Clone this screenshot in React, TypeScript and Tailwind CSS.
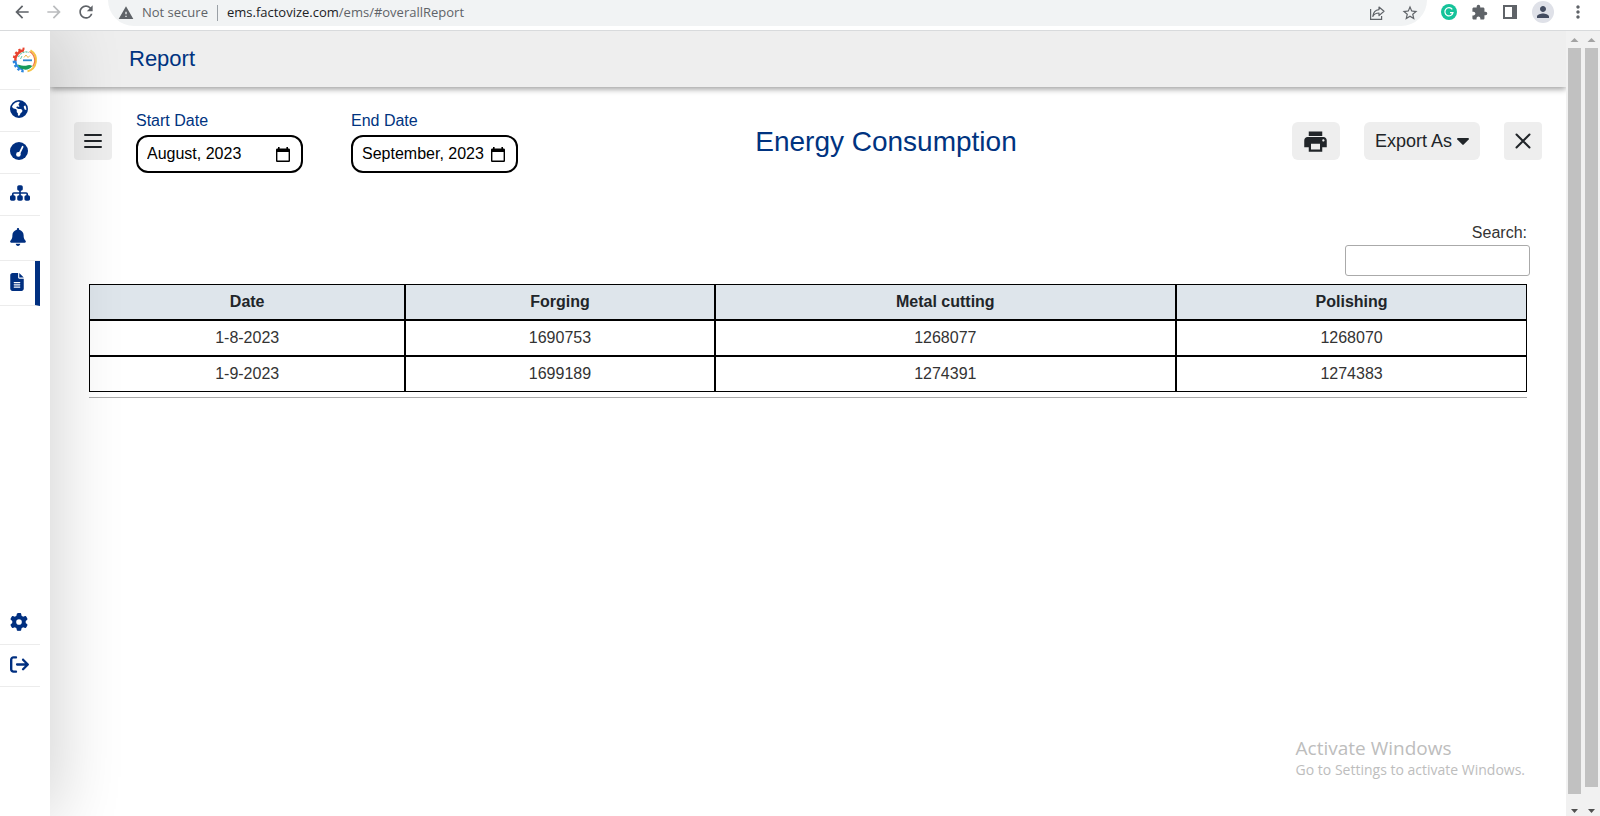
import { useState } from "react";
import type { ReactNode } from "react";
import {
  FaArrowRightFromBracket,
  FaBell,
  FaEarthAmericas,
  FaFileLines,
  FaGear,
  FaSitemap,
} from "react-icons/fa6";
import {
  MdArrowBack,
  MdArrowForward,
  MdExtension,
  MdLocalPrintshop,
  MdMoreVert,
  MdPerson,
  MdRefresh,
  MdStarBorder,
  MdWarning,
} from "react-icons/md";

const columns = ["Date", "Forging", "Metal cutting", "Polishing"];

const rows = [
  ["1-8-2023", "1690753", "1268077", "1268070"],
  ["1-9-2023", "1699189", "1274391", "1274383"],
];

function BrowserBar() {
  return (
    <div className="flex h-[31px] shrink-0 items-start border-b border-[#d8dadc] bg-white font-['Open_Sans',sans-serif] text-[#5f6368]">
      <div className="flex h-6 items-center gap-3 pl-3">
        <button aria-label="Back">
          <MdArrowBack size={20} />
        </button>
        <button aria-label="Forward" className="text-[#babcbe]">
          <MdArrowForward size={20} />
        </button>
        <button aria-label="Reload">
          <MdRefresh size={20} />
        </button>
      </div>
      <div className="ml-3 flex h-[26px] flex-1 items-center rounded-b-full bg-[#f1f3f4] pr-2 pb-px pl-[10px] text-[13px]">
        <MdWarning size={16} />
        <span className="ml-2">Not secure</span>
        <span className="mx-[9px] h-4 w-px bg-[#9aa0a6]" />
        <span className="flex-1 whitespace-nowrap">
          <span className="text-[#202124]">ems.factovize.com</span>/ems/#overallReport
        </span>
        <button aria-label="Share" className="mr-4">
          <svg width="16" height="16" viewBox="0 0 16 16" fill="none" stroke="currentColor" strokeWidth="1.2">
            <path d="M1.6 4v10.4h11V11" />
            <path d="M10 2l5 4.300-5 4.300V8C7 8 5 9 3.800 11.400 4.200 7.600 6.500 5 10 4.600z" strokeLinejoin="round" />
          </svg>
        </button>
        <button aria-label="Bookmark">
          <MdStarBorder size={18} />
        </button>
      </div>
      <div className="flex h-6 items-center gap-[14px] pr-3 pl-[14px]">
        <button aria-label="Grammar check">
          <svg width="16" height="16" viewBox="0 0 16 16">
            <circle cx="8" cy="8" r="8" fill="#15c39a" />
            <path d="M11.300 5.300A4.100 4.100 0 1 0 12 8.700H9M10.600 10.800l1.400-2.100" fill="none" stroke="#fff" strokeWidth="1.200" />
          </svg>
        </button>
        <button aria-label="Extensions">
          <MdExtension size={17} />
        </button>
        <button aria-label="Side panel">
          <svg width="16" height="16" viewBox="0 0 16 16" fill="currentColor">
            <path d="M1 1h14v14H1zM3 3v10h7V3z" fillRule="evenodd" />
          </svg>
        </button>
        <button
          aria-label="Profile"
          className="flex size-[22px] items-center justify-center rounded-full bg-[#dfe1e8] text-[#434c60]"
        >
          <MdPerson size={18} />
        </button>
        <button aria-label="More">
          <MdMoreVert size={20} />
        </button>
      </div>
    </div>
  );
}

function Logo() {
  return (
    <svg width="28" height="28" viewBox="0 0 28 28" fill="none">
      <path d="M4.400 15A9.800 9.800 0 0 1 13 4.300" stroke="#e8432e" strokeWidth="2.400" />
      <path d="M3 12A11.300 11.300 0 0 1 13.500 2.600" stroke="#e8432e" strokeWidth="2.400" strokeDasharray="2.400 2" />
      <path d="M4.300 14.500A9.800 9.800 0 0 0 12 23.600" stroke="#2b86e0" strokeWidth="2.200" />
      <path d="M2.800 14.800A11.300 11.300 0 0 0 13 25.400" stroke="#2b86e0" strokeWidth="2.400" strokeDasharray="2.400 2" />
      <path d="M19.500 4.300A11.600 11.600 0 0 1 16.500 25.400" stroke="#f6c445" strokeWidth="1.800" />
      <path d="M18.500 5.500A10 10 0 0 1 21.500 20.500" stroke="#ef7b45" strokeWidth="1.200" />
      <path d="M7.500 11A8 8 0 0 1 18 6.500" stroke="#63c7a5" strokeWidth="1.200" strokeDasharray="2 1" />
      <path d="M6.500 18.500c3.500 1 5.500 1.300 8.500 1.200 2.500-.8 4.500-.9 6.300.300-2.300 3-5 4-8.300 3.600-3-.4-5.200-2.200-6.500-5.100z" fill="#169a5b" />
      <path d="M12 14.300h9" stroke="#2f8bd0" strokeWidth="1.800" />
      <path d="M13 11.500l2-2.500 2 2.500 2-2" stroke="#f0b94a" strokeWidth="1" />
      <path d="M9.500 13l1.500-3" stroke="#63c7a5" strokeWidth="1" />
    </svg>
  );
}

function GaugeIcon() {
  return (
    <svg width="18" height="18" viewBox="0 0 18 18">
      <circle cx="9" cy="9" r="9" fill="currentColor" />
      <path d="M12.600 4.800L9.200 11.800" stroke="#fff" strokeWidth="1.800" strokeLinecap="round" />
      <circle cx="8.400" cy="12.400" r="2.300" fill="#fff" />
    </svg>
  );
}

function NavItem({
  label,
  active = false,
  tall = false,
  children,
}: {
  label: string;
  active?: boolean;
  tall?: boolean;
  children: ReactNode;
}) {
  return (
    <a
      href={"#" + label}
      aria-label={label}
      className={
        "flex w-10 items-center border-b border-[#ececec] pb-[3px] pl-[10px] " +
        (tall ? "h-[45px] " : "h-[42px] ") +
        (active ? "border-r-[5px] border-r-[#002f80]" : "")
      }
    >
      {children}
    </a>
  );
}

function Sidebar() {
  return (
    <nav className="relative z-10 flex w-[50px] shrink-0 flex-col bg-white text-[#002f80] shadow-[0_0_70px_rgba(0,0,0,0.24)]">
      <div className="flex h-[59px] w-10 items-center border-b border-[#ececec] pl-[11px]">
        <Logo />
      </div>
      <NavItem label="overview">
        <FaEarthAmericas size={18} />
      </NavItem>
      <NavItem label="dashboard">
        <GaugeIcon />
      </NavItem>
      <NavItem label="hierarchy">
        <FaSitemap size={20} />
      </NavItem>
      <NavItem label="alerts" tall>
        <FaBell className="h-[18px] w-4" />
      </NavItem>
      <NavItem label="reports" active tall>
        <FaFileLines className="h-[18px] w-[14px]" />
      </NavItem>
      <div className="mt-auto mb-[129px]">
        <NavItem label="settings">
          <FaGear size={18} />
        </NavItem>
        <NavItem label="logout">
          <FaArrowRightFromBracket size={19} />
        </NavItem>
      </div>
    </nav>
  );
}

function MonthField({ id, label, initial }: { id: string; label: string; initial: string }) {
  const [value, setValue] = useState(initial);
  return (
    <div className="flex flex-col gap-[2px]">
      <label htmlFor={id} className="text-base leading-6 text-[#003380]">
        {label}
      </label>
      <div className="flex h-[38px] w-[167px] items-center rounded-xl border-2 border-black bg-white pr-[11px] pl-[9px]">
        <input
          id={id}
          type="text"
          value={value}
          onChange={(e) => setValue(e.target.value)}
          className="w-0 min-w-0 flex-1 bg-transparent text-base text-black outline-none"
        />
        <button aria-label={"Pick " + label} className="text-black">
          <svg width="14" height="15" viewBox="0 0 14 15" fill="currentColor">
            <path
              d="M2 0h1.600v1.500h6.800V0H12v1.500h.7c.7 0 1.300.6 1.300 1.300v10.900c0 .7-.6 1.300-1.300 1.300H1.300C.6 15 0 14.400 0 13.700V2.800c0-.7.6-1.300 1.300-1.300H2zM1.400 5v8.600h11.200V5z"
              fillRule="evenodd"
            />
          </svg>
        </button>
      </div>
    </div>
  );
}

function Toolbar() {
  return (
    <div className="flex items-start px-6 pt-[22px]">
      <button aria-label="Menu" className="mt-[13px] flex size-[38px] items-center justify-center rounded bg-[#eee]">
        <svg width="18" height="14" viewBox="0 0 18 14" stroke="currentColor" strokeWidth="2" strokeLinecap="round">
          <path d="M1 1h16M1 7h16M1 13h16" />
        </svg>
      </button>
      <div className="ml-6 flex gap-12">
        <MonthField id="start" label="Start Date" initial="August, 2023" />
        <MonthField id="end" label="End Date" initial="September, 2023" />
      </div>
      <h2 className="mt-[13px] flex-1 pr-[38px] text-center text-[28px] leading-10 text-[#003380]">
        Energy Consumption
      </h2>
      <div className="mt-[13px] flex gap-6">
        <button aria-label="Print" className="flex h-[38px] w-12 items-center justify-center rounded-md bg-[#eee]">
          <MdLocalPrintshop size={27} />
        </button>
        <button className="flex h-[38px] items-center gap-[5px] rounded-md bg-[#eee] px-[11px] text-lg">
          Export As
          <svg width="12" height="7" viewBox="0 0 12 7" fill="currentColor">
            <path d="M1 0h10c.9 0 1.200.9.700 1.500L6.700 6.600a1 1 0 0 1-1.400 0L.300 1.500C-.2.900.100 0 1 0z" />
          </svg>
        </button>
        <button aria-label="Close" className="flex size-[38px] items-center justify-center rounded bg-[#eee]">
          <svg width="16" height="16" viewBox="0 0 16 16" stroke="currentColor" strokeWidth="2" strokeLinecap="round">
            <path d="M1.500 1.500l13 13M14.500 1.500l-13 13" />
          </svg>
        </button>
      </div>
    </div>
  );
}

function ReportTable() {
  const [query, setQuery] = useState("");
  const visible = rows.filter((row) => row.some((cell) => cell.includes(query)));
  return (
    <section className="mt-12 px-[39px]">
      <div className="-mr-[3px] flex flex-col items-end">
        <label htmlFor="search" className="pr-[3px] text-base leading-6 text-[#333]">
          Search:
        </label>
        <input
          id="search"
          type="search"
          value={query}
          onChange={(e) => setQuery(e.target.value)}
          className="h-[31px] w-[185px] rounded-[3px] border border-[#aaa] bg-white px-1"
        />
      </div>
      <div className="mt-2 border-b border-[#aaa] pb-[5px]">
        <table className="w-full table-fixed border-separate border-spacing-0 text-center text-base leading-6">
          <colgroup>
            <col className="w-[22%]" />
            <col className="w-[21.5%]" />
            <col className="w-[32.1%]" />
            <col className="w-[24.4%]" />
          </colgroup>
          <thead>
            <tr>
              {columns.map((name) => (
                <th key={name} className="border border-black bg-[#dee5eb] py-[5px] font-bold">
                  {name}
                </th>
              ))}
            </tr>
          </thead>
          <tbody>
            {visible.map((row) => (
              <tr key={row[0]}>
                {row.map((cell, i) => (
                  <td key={i} className="border border-black py-[5px] text-[#333]">
                    {cell}
                  </td>
                ))}
              </tr>
            ))}
          </tbody>
        </table>
      </div>
    </section>
  );
}

function ScrollTrack({ gap }: { gap: "short" | "long" }) {
  return (
    <div className="flex w-[17px] flex-col items-center bg-[#f1f1f1]">
      <svg width="13" height="17" viewBox="0 0 13 17" fill="#a3a3a3">
        <path d="M6.500 7l4 4h-8z" />
      </svg>
      <div className="w-[13px] flex-1 bg-[#c1c1c1]" />
      <svg
        width="13"
        height="17"
        viewBox="0 0 13 17"
        fill="#505050"
        className={gap === "short" ? "mt-[5px]" : "mt-[12px]"}
      >
        <path d="M3 10h7l-3.500 4z" />
      </svg>
    </div>
  );
}

export default function App() {
  return (
    <div className="flex h-screen flex-col overflow-hidden bg-white font-['Liberation_Sans',Arial,sans-serif] text-[#212529]">
      <BrowserBar />
      <div className="flex min-h-0 flex-1 overflow-hidden">
        <Sidebar />
        <main className="relative flex min-w-0 flex-1 flex-col overflow-hidden">
          <header className="flex h-14 shrink-0 items-center bg-[#eee] pb-[2px] pl-[79px] shadow-[0_2px_6px_rgba(0,0,0,0.4)]">
            <h1 className="text-[22px] text-[#003380]">Report</h1>
          </header>
          <Toolbar />
          <ReportTable />
          <div className="absolute right-[41px] bottom-9 font-['Open_Sans',sans-serif] whitespace-nowrap text-[#bdbdbd]">
            <p className="text-[19px] leading-6">Activate Windows</p>
            <p className="text-sm leading-5">Go to Settings to activate Windows.</p>
          </div>
        </main>
        <div className="flex shrink-0" aria-hidden="true">
          <ScrollTrack gap="short" />
          <ScrollTrack gap="long" />
        </div>
      </div>
    </div>
  );
}
